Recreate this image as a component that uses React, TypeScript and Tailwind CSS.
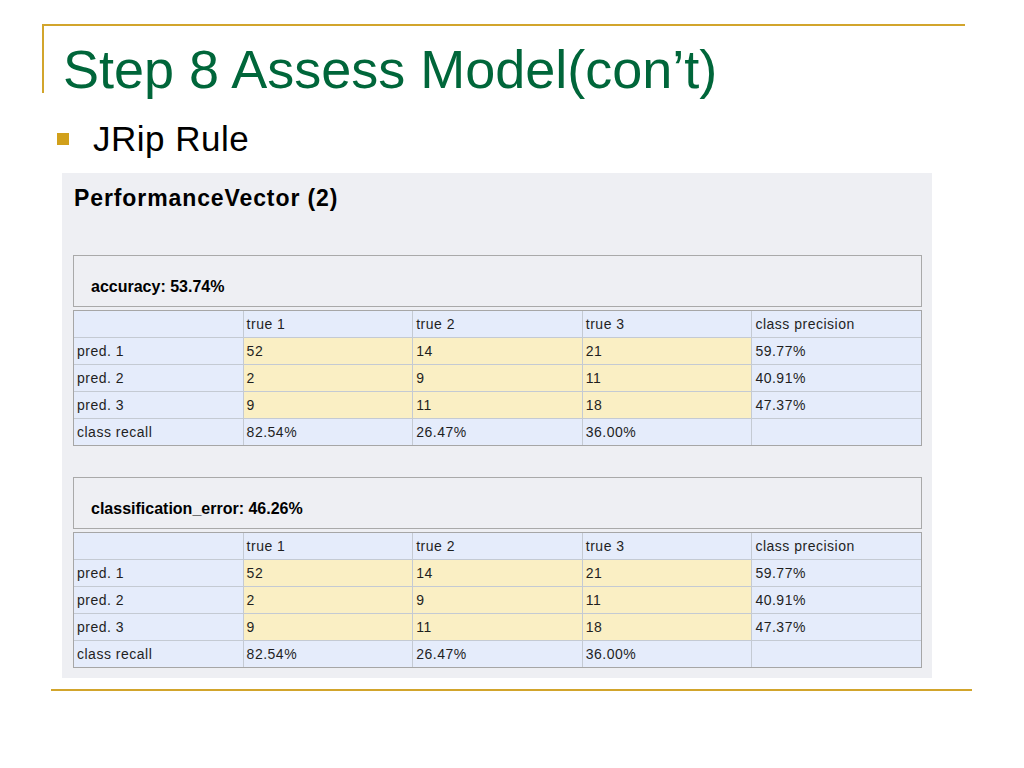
const COLS = ['', 'true 1', 'true 2', 'true 3', 'class precision']

const ROWS = [
  ['pred. 1', '52', '14', '21', '59.77%'],
  ['pred. 2', '2', '9', '11', '40.91%'],
  ['pred. 3', '9', '11', '18', '47.37%'],
  ['class recall', '82.54%', '26.47%', '36.00%', ''],
]

function Matrix({ label }: { label: string }) {
  return (
    <div className="flex flex-col gap-[3px]">
      <div className="h-[52px] border border-[#a9a9a9] bg-[#eeeff3] pl-[17px] pt-[19px]">
        <span className="font-['Liberation_Sans',Arial,sans-serif] text-[16px] font-bold leading-[16px] text-black">
          {label}
        </span>
      </div>
      <div className="grid grid-cols-5 gap-px border border-[#a6a6a6] bg-[#c4cad3] font-['Liberation_Sans',Arial,sans-serif] text-[14px] tracking-[0.5px] text-[#1f1f1f]">
        {COLS.map((c, i) => (
          <div key={i} className="flex h-[26px] items-center bg-[#e5ecfb] pl-[3px]">
            {c}
          </div>
        ))}
        {ROWS.map((row, r) =>
          row.map((cell, i) => {
            const data = i > 0 && i < 4 && r < 3
            return (
              <div
                key={`${r}-${i}`}
                className={`flex h-[26px] items-center pl-[3px] ${data ? 'bg-[#faefc4]' : 'bg-[#e5ecfb]'}`}
              >
                {cell}
              </div>
            )
          })
        )}
      </div>
    </div>
  )
}

export default function App() {
  return (
    <div className="relative h-[768px] w-[1024px] overflow-hidden bg-white font-['Liberation_Sans',Arial,sans-serif]">
      <div className="ml-[42px] mt-[24px] h-[69px] w-[923px] border-l-2 border-t-2 border-[#d2a52c] pl-[19px] pt-[16px]">
        <h1 className="text-[54px] leading-[54px] text-[#00663a]">Step 8 Assess Model(con’t)</h1>
      </div>

      <div className="ml-[57px] mt-[28px] flex items-center gap-[24px]">
        <span className="h-[12px] w-[12px] bg-[#d1a01b]" />
        <span className="text-[35px] leading-[35px] tracking-[0.5px] text-black">JRip Rule</span>
      </div>

      <div className="ml-[62px] mt-[17px] w-[870px] bg-[#eeeff3] pb-[10px] pl-[11px] pr-[10px] pt-[14px]">
        <div className="pl-px text-[23px] font-bold leading-[23px] tracking-[0.9px] text-black">
          PerformanceVector (2)
        </div>
        <div className="mt-[45px]">
          <Matrix label="accuracy: 53.74%" />
        </div>
        <div className="mt-[31px]">
          <Matrix label="classification_error: 46.26%" />
        </div>
      </div>

      <div className="ml-[51px] mt-[11px] h-[2px] w-[921px] bg-[#d2a52c]" />
    </div>
  )
}
